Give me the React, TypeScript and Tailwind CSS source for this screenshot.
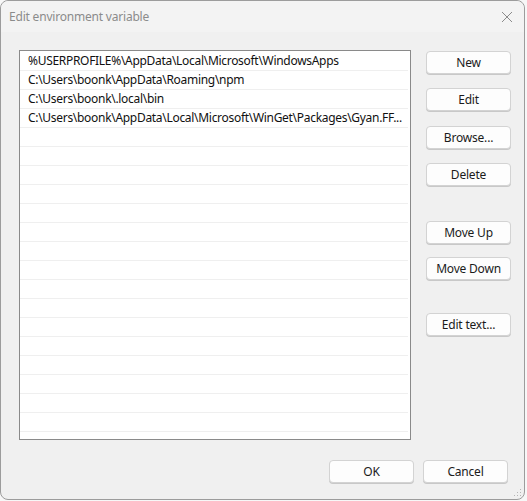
const paths = [
  "%USERPROFILE%\\AppData\\Local\\Microsoft\\WindowsApps",
  "C:\\Users\\boonk\\AppData\\Roaming\\npm",
  "C:\\Users\\boonk\\.local\\bin",
  "C:\\Users\\boonk\\AppData\\Local\\Microsoft\\WinGet\\Packages\\Gyan.FF...",
];

const ROW_COUNT = 21;

const Button = ({ label, className = "" }: { label: string; className?: string }) => (
  <button
    className={
      "flex h-[23px] w-[85px] items-center justify-center rounded-[4px] border border-[#d3d3d3] bg-[#fdfdfd] text-[12px] tracking-[-0.2px] text-[#1b1b1b] shadow-[0_1px_0_#c8c8c8] " +
      className
    }
  >
    {label}
  </button>
);

export default function App() {
  const rows = Array.from({ length: ROW_COUNT }, (_, i) => paths[i] ?? "");

  return (
    <div
      className="h-[501px] w-[527px] overflow-hidden bg-[#f7f7f7]"
      style={{ fontFamily: '"Noto Sans", "Open Sans", sans-serif' }}
    >
      <div className="relative flex h-[500px] w-[525px] flex-col rounded-[8px] border border-[#9c9c9c] bg-[#f0f0f0]">
        {/* title bar */}
        <div className="flex h-[31px] items-center justify-between rounded-t-[8px] bg-[#f3f3f3] pl-[8px] pr-[11px]">
          <span className="text-[12px] tracking-[-0.2px] text-[#8b8b8b]">Edit environment variable</span>
          <svg width="12" height="12" viewBox="0 0 12 12" className="text-[#8b8b8b]">
            <path d="M1 1 L11 11 M11 1 L1 11" stroke="currentColor" strokeWidth="1" />
          </svg>
        </div>

        <div className="flex pl-[18px] pt-[18px]">
          {/* list */}
          <div className="h-[390px] w-[392px] overflow-hidden border border-[#8a8a8a] bg-white pt-[1px]">
            {rows.map((p, i) => (
              <div
                key={i}
                className="mr-[2px] flex h-[19px] items-center border-b border-[#efefef] pl-[8px] text-[12px] leading-none tracking-[-0.3px] whitespace-nowrap text-[#111]"
              >
                {p}
              </div>
            ))}
          </div>

          {/* side buttons */}
          <div className="ml-[15px] flex flex-col pt-[1px]">
            <Button label="New" />
            <Button label="Edit" className="mt-[14px]" />
            <Button label="Browse..." className="mt-[15px]" />
            <Button label="Delete" className="mt-[14px]" />
            <Button label="Move Up" className="mt-[35px]" />
            <Button label="Move Down" className="mt-[13px]" />
            <Button label="Edit text..." className="mt-[33px]" />
          </div>
        </div>

        {/* bottom buttons */}
        <div className="mt-[20px] flex justify-end gap-[9px] pr-[16px]">
          <Button label="OK" />
          <Button label="Cancel" />
        </div>

        {/* resize grip */}
        <svg width="8" height="8" viewBox="0 0 8 8" className="absolute right-[2px] bottom-[2px] text-[#b5b5b5]">
          <rect x="6" y="0" width="1" height="1" fill="currentColor" />
          <rect x="3" y="3" width="1" height="1" fill="currentColor" />
          <rect x="6" y="3" width="1" height="1" fill="currentColor" />
          <rect x="0" y="6" width="1" height="1" fill="currentColor" />
          <rect x="3" y="6" width="1" height="1" fill="currentColor" />
          <rect x="6" y="6" width="1" height="1" fill="currentColor" />
        </svg>
      </div>
    </div>
  );
}
